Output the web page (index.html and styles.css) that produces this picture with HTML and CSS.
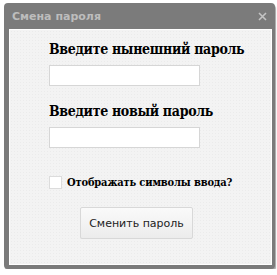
FILE: index.html
```html
<!DOCTYPE html>
<html lang="ru">
<head>
  <meta charset="UTF-8">
  <title>Смена пароля</title>
  <link rel="stylesheet" href="styles.css">
</head>
<body>
  <div class="dialog">
    <div class="titlebar">
      <span class="title">Смена пароля</span>
      <svg class="close" width="9" height="9" viewBox="0 0 9 9">
        <path d="M1 1L8 8M8 1L1 8" stroke="#c4c4c4" stroke-width="1.6" fill="none"/>
      </svg>
    </div>
    <div class="content">
      <h3>Введите нынешний пароль</h3>
      <input type="password" class="field">
      <h3>Введите новый пароль</h3>
      <input type="password" class="field">
      <label class="show">
        <span class="box"></span>
        Отображать символы ввода?
      </label>
      <div class="actions">
        <button class="btn">Сменить пароль</button>
      </div>
    </div>
  </div>
</body>
</html>
```

FILE: styles.css
```css
body {
  margin: 0;
  padding: 3px 0 0 4px;
  background: #fff;
}

.dialog {
  width: 263px;
  height: 262px;
  background: #7b7b7b;
  border-radius: 4px;
  padding: 0 3px 4px 5px;
  box-shadow: 1px 2px 1px rgba(0, 0, 0, 0.35);
  display: flex;
  flex-direction: column;
}

.titlebar {
  height: 26px;
  display: flex;
  align-items: center;
  justify-content: space-between;
  padding: 0 5px 0 3px;
}

.title {
  font-family: "DejaVu Sans", sans-serif;
  font-size: 11px;
  font-weight: bold;
  color: #bdbdbd;
}

.content {
  flex: 1;
  background-color: #f3f3f3;
  background-image: radial-gradient(#ebebeb 0.6px, transparent 0.8px);
  background-size: 3px 3px;
  border: 1px solid #fff;
  padding: 0 0 0 39px;
}

h3 {
  font-family: "DejaVu Serif", serif;
  font-stretch: condensed;
  font-size: 14px;
  font-weight: bold;
  letter-spacing: -0.3px;
  white-space: nowrap;
  color: #000;
  margin: 10px 0 6px 0;
  line-height: 19px;
}

.field {
  display: block;
  width: 151px;
  height: 21px;
  box-sizing: border-box;
  border: 1px solid #d6d6d6;
  background: #fff;
  padding: 0;
  margin: 0 0 16px 0;
}

.show {
  display: flex;
  align-items: center;
  gap: 5px;
  font-family: "DejaVu Serif", serif;
  font-stretch: condensed;
  font-size: 11px;
  font-weight: bold;
  letter-spacing: -0.15px;
  white-space: nowrap;
  color: #000;
  margin-top: 28px;
}

.box {
  width: 11px;
  height: 11px;
  border: 1px solid #dcdcdc;
  background: #fff;
}

.actions {
  padding-left: 31px;
  margin-top: 18px;
}

.btn {
  width: 113px;
  height: 32px;
  border: 1px solid #d8d8d8;
  border-radius: 2px;
  background: linear-gradient(to bottom, #fafafa, #ececec);
  font-family: "DejaVu Sans", sans-serif;
  font-size: 11px;
  color: #222;
}
```
